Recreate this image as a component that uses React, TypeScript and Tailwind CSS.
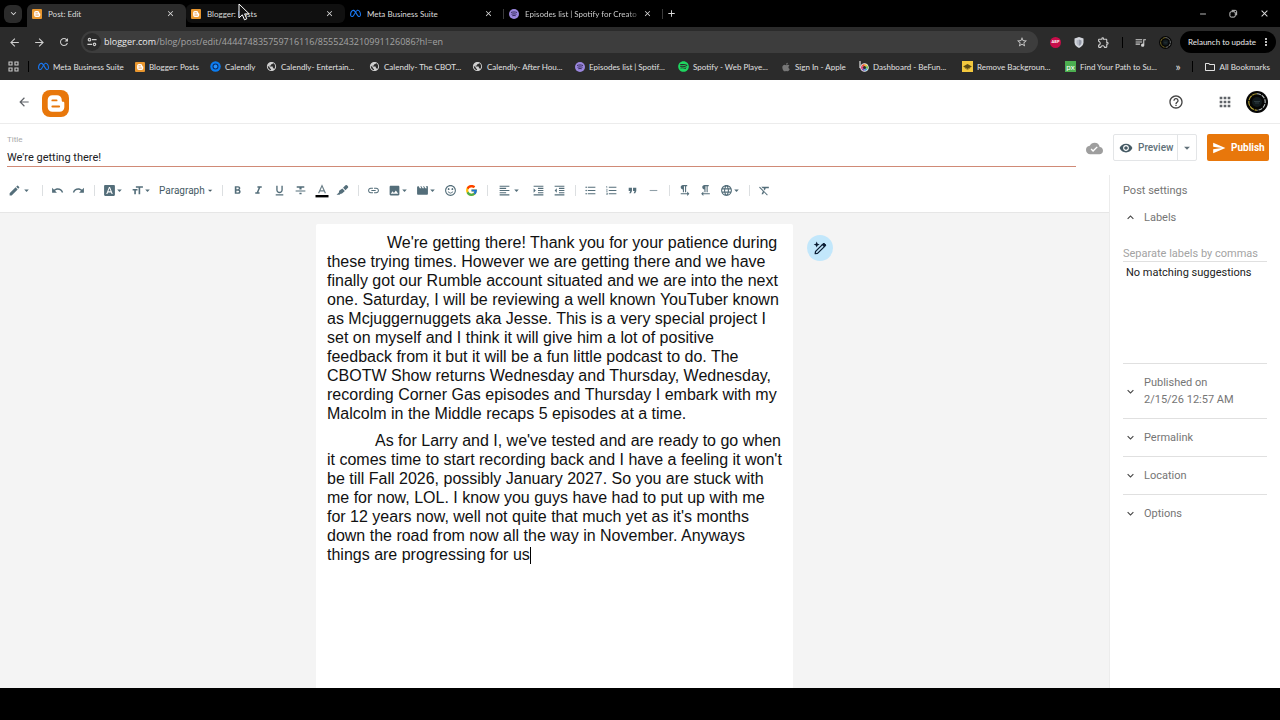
import type { ReactNode } from "react";
import clsx from "clsx";
import { FaApple, FaMeta, FaSpotify } from "react-icons/fa6";
import { FcGoogle } from "react-icons/fc";
import {
    MdAdd,
    MdApps,
    MdArrowBack,
    MdArrowDropDown,
    MdArrowForward,
    MdClose,
    MdCloudDone,
    MdEdit,
    MdExpandLess,
    MdExpandMore,
    MdFontDownload,
    MdFormatAlignLeft,
    MdFormatBold,
    MdFormatClear,
    MdFormatIndentDecrease,
    MdFormatIndentIncrease,
    MdFormatItalic,
    MdFormatListBulleted,
    MdFormatListNumbered,
    MdFormatQuote,
    MdFormatSize,
    MdFormatStrikethrough,
    MdFormatTextdirectionLToR,
    MdFormatTextdirectionRToL,
    MdFormatUnderlined,
    MdHelpOutline,
    MdImage,
    MdLanguage,
    MdLink,
    MdMoreVert,
    MdMovie,
    MdOutlineExtension,
    MdOutlineFolder,
    MdPublic,
    MdQueueMusic,
    MdRedo,
    MdRefresh,
    MdRemove,
    MdSend,
    MdSentimentSatisfiedAlt,
    MdStarBorder,
    MdUndo,
    MdVisibility,
} from "react-icons/md";

/* ---------- small drawings ---------- */

function BloggerMark({ className }: { className: string }) {
    return (
        <svg viewBox="0 0 26 26" className={className} aria-hidden="true">
            <path
                fill="#fff"
                d="M5.500 9.500a4.500 4.500 0 0 1 4.500-4.500h4.500a4.500 4.500 0 0 1 4.500 4.500v.6c0 .8.5 1.200 1.200 1.200.8 0 1.300.5 1.300 1.300v3.900a4.500 4.500 0 0 1-4.500 4.500h-7a4.500 4.500 0 0 1-4.500-4.500z"
            />
            <path stroke="#e8770b" strokeWidth="1.900" strokeLinecap="round" d="M10 10h4M10 15.800h6.500" />
        </svg>
    );
}

function BloggerTile() {
    return (
        <span className="flex size-[10px] shrink-0 items-center justify-center rounded-[1px] bg-[#e8962e]">
            <BloggerMark className="size-[10px]" />
        </span>
    );
}

function PodcastIcon() {
    return (
        <svg viewBox="0 0 20 20" className="size-[10px] shrink-0" aria-hidden="true">
            <circle cx="10" cy="10" r="10" fill="#9a86dd" />
            <path d="M4 7c4-1.500 8-1.500 12 0M5 10.500c3.500-1 7-1 10 0M6.500 13.500c2.500-.7 4.500-.7 7 0" stroke="#2c2350" strokeWidth="1.800" fill="none" />
        </svg>
    );
}

function CalendlyIcon() {
    return (
        <svg viewBox="0 0 20 20" className="size-[11px] shrink-0" aria-hidden="true">
            <circle cx="10" cy="10" r="9.500" fill="#0b7cf0" />
            <circle cx="10" cy="10" r="4.500" fill="none" stroke="#0d2f66" strokeWidth="2" />
            <circle cx="10" cy="10" r="3" fill="#2a93fa" />
        </svg>
    );
}

function BeFunkyIcon() {
    return (
        <svg viewBox="0 0 20 22" className="h-[11px] w-[10px] shrink-0" aria-hidden="true">
            <path d="M2 0v14" stroke="#d8d8d8" strokeWidth="2.500" />
            <circle cx="11" cy="13" r="8.500" fill="#e9e9e9" />
            <path d="M11 13V6a7 7 0 0 1 6 3.500z" fill="#f2b632" />
            <path d="M11 13l6-3.500a7 7 0 0 1 0 7z" fill="#6abf4b" />
            <path d="M11 13l6 3.500a7 7 0 0 1-6 3.500z" fill="#36a3dc" />
            <path d="M11 13v7a7 7 0 0 1-6-3.500z" fill="#7e4bb0" />
            <path d="M11 13l-6 3.500a7 7 0 0 1 0-7z" fill="#d63a7a" />
            <path d="M11 13L5 9.500A7 7 0 0 1 11 6z" fill="#e8532f" />
            <circle cx="11" cy="13" r="3" fill="#2b2b2b" />
        </svg>
    );
}

function RemoveBgIcon() {
    return (
        <svg viewBox="0 0 20 20" className="size-[11px] shrink-0" aria-hidden="true">
            <rect width="20" height="20" fill="#f3c83e" />
            <path d="M2 10l8-4.500 8 4.500-8 4.500z" fill="#5b4a14" />
            <path d="M5 12.500l5 3 5-3" stroke="#8a7426" strokeWidth="1.500" fill="none" />
        </svg>
    );
}

function TuneIcon() {
    return (
        <svg viewBox="0 0 12 12" className="size-[10px]" fill="none" stroke="currentColor" strokeWidth="1.400" aria-hidden="true">
            <circle cx="3" cy="3.200" r="1.500" />
            <path d="M6 3.200h5.500M.5 8.800H6" />
            <circle cx="9" cy="8.800" r="1.500" />
        </svg>
    );
}

function AppsGridIcon() {
    return (
        <svg viewBox="0 0 12 12" className="size-[11px]" fill="none" stroke="#c9c9c9" strokeWidth="1.200" aria-hidden="true">
            <path d="M1.100 1.100h3.300v3.300H1.100zM7.600 1.100h3.300v3.300H7.600zM1.100 7.600h3.300v3.300H1.100zM7.600 7.600h3.300v3.300H7.600z" />
        </svg>
    );
}

function ShieldIcon() {
    return (
        <svg viewBox="0 0 20 22" className="h-[11px] w-[10px]" aria-hidden="true">
            <path d="M10 0l9 3v8c0 5-4 9-9 11-5-2-9-6-9-11V3z" fill="#d3d6dc" />
            <path d="M10 5l5 2v4c0 3-2 5.500-5 7z" fill="#9297a6" />
            <path d="M10 5L5 7v4c0 3 2 5.500 5 7z" fill="#b4b8c4" />
        </svg>
    );
}

function RingAvatar({ className }: { className: string }) {
    return (
        <svg viewBox="0 0 22 22" className={className} aria-hidden="true">
            <circle cx="11" cy="11" r="11" fill="#050505" />
            <path d="M11 2.800A8.200 8.200 0 0 0 11 19.200" fill="none" stroke="#b5a336" strokeWidth="1.100" strokeDasharray="5 .8" />
            <path d="M11 2.800A8.200 8.200 0 0 1 11 19.200" fill="none" stroke="#b9c0c0" strokeWidth="1.100" strokeDasharray="4 1" />
            <circle cx="11" cy="11" r="5" fill="#111a1d" />
            <path d="M8 10.500h6M9 12h4" stroke="#3a4a50" strokeWidth=".7" />
        </svg>
    );
}

function HighlighterIcon() {
    return (
        <svg viewBox="0 0 24 24" className="size-[13px]" fill="currentColor" aria-hidden="true">
            <path d="M13 7l4.500-4.500a2 2 0 0 1 2.800 0l1.700 1.700a2 2 0 0 1 0 2.800L17.500 11.500z" />
            <path d="M11.800 8.200l4.500 4.500-4.600 4.600c-1 1-2.300.9-3.100.5L6.500 20H1l4.800-4.800c-.6-1-.3-2.200.5-3z" />
        </svg>
    );
}

function TextColorIcon() {
    return (
        <svg viewBox="0 0 14 14" className="size-[14px]" aria-hidden="true">
            <path d="M3.600 9.200L7 1.600l3.400 7.600M4.800 6.800h4.400" fill="none" stroke="#6b7f88" strokeWidth="1.200" />
            <rect x=".5" y="11" width="13" height="2.400" fill="#000" />
        </svg>
    );
}

function MagicPenIcon() {
    return (
        <svg viewBox="0 0 14 14" className="size-[14px]" fill="none" stroke="#0b1d33" aria-hidden="true">
            <path d="M2.600 10.400L9.400 3.600a1.300 1.300 0 0 1 2 2L4.500 12.400l-2.300.3z" strokeWidth="1.300" strokeLinejoin="round" />
            <path d="M9.200 3.600l1.800-1.400 1.900 1.900-1.500 1.800z" fill="#0b1d33" />
            <path d="M3.700.6l.9 2.100 2.100.9-2.100.9-.9 2.100-.9-2.100L.7 3.600l2.100-.9z" fill="#0b1d33" stroke="none" />
        </svg>
    );
}

/* ---------- browser ---------- */

const tabs = [
    { title: "Post: Edit", icon: <BloggerTile />, state: "active" },
    { title: "Blogger: Posts", icon: <BloggerTile />, state: "hover" },
    { title: "Meta Business Suite", icon: <FaMeta className="size-[11px] shrink-0 text-[#1877f2]" />, state: "idle" },
    { title: "Episodes list | Spotify for Creato", icon: <PodcastIcon />, state: "idle" },
];

function TabStrip() {
    return (
        <div className="flex h-[27px] items-center bg-black pl-1 text-[#dcdcdc]">
            <button aria-label="Search tabs" className="flex size-[18px] items-center justify-center rounded-md bg-[#2b2b2b]">
                <MdExpandMore className="size-[11px]" />
            </button>
            <div className="flex self-stretch pt-1 pl-[5px]">
                {tabs.map((tab) => (
                    <div
                        key={tab.title}
                        className={clsx(
                            "flex w-[159px] items-center rounded-t-md pr-[11px] pb-1 pl-[5px]",
                            tab.state === "active" && "bg-[#2b2b2b]",
                            tab.state === "hover" && "mb-1 rounded-md bg-[#101010] pt-1",
                        )}
                    >
                        {tab.icon}
                        <span
                            className={clsx(
                                "ml-[6px] flex-1 text-[8px] whitespace-nowrap",
                                tab.title.length > 30 && "bg-linear-to-r from-[#dcdcdc] from-90% to-[#333] bg-clip-text text-transparent",
                            )}
                        >
                            {tab.title}
                        </span>
                        <button aria-label={"Close " + tab.title} className="ml-1">
                            <MdClose className="size-[9px]" />
                        </button>
                        {tab.state === "idle" && <span className="-mr-[11px] ml-[10px] h-[10px] w-px bg-[#3a3a3a]" />}
                    </div>
                ))}
            </div>
            <button aria-label="New tab" className="ml-[3px]">
                <MdAdd className="size-[11px]" />
            </button>
            <div className="mr-[10px] ml-auto flex items-center gap-[21px]">
                <button aria-label="Minimize"><MdRemove className="size-[10px]" /></button>
                <button aria-label="Restore">
                    <svg viewBox="0 0 10 10" className="size-[9px]" fill="none" stroke="currentColor">
                        <rect x="1" y="3" width="6" height="6" rx="1.500" />
                        <path d="M3 1.500h4A1.500 1.500 0 0 1 8.500 3v4" />
                    </svg>
                </button>
                <button aria-label="Close window"><MdClose className="size-[11px]" /></button>
            </div>
        </div>
    );
}

function AddressRow() {
    return (
        <div className="flex h-[30px] items-center bg-[#2b2b2b] pr-1 pl-2 text-[#d0d0d0]">
            <div className="flex w-[73px] items-center gap-3">
                <button aria-label="Back"><MdArrowBack className="size-[13px]" /></button>
                <button aria-label="Forward"><MdArrowForward className="size-[13px]" /></button>
                <button aria-label="Reload"><MdRefresh className="size-[12px]" /></button>
            </div>
            <div className="flex h-[22px] flex-1 items-center rounded-full bg-[#3d3d3d] pr-[10px] pl-[2px]">
                <button aria-label="Site information" className="flex size-[18px] items-center justify-center rounded-full bg-[#2b2b2b]">
                    <TuneIcon />
                </button>
                <div className="ml-[3px] flex-1 font-['Open_Sans','Noto_Sans',sans-serif] text-[9px] text-[#a3a3a3]">
                    <span className="text-[#ececec]">blogger.com</span>/blog/post/edit/444474835759716116/8555243210991126086?hl=en
                </div>
                <button aria-label="Bookmark this tab"><MdStarBorder className="size-[12px]" /></button>
            </div>
            <div className="ml-3 flex items-center">
                <span className="flex size-[11px] items-center justify-center rounded-full bg-[#c70d4a] text-[4px] font-bold text-white">ABP</span>
                <span className="ml-[13px]"><ShieldIcon /></span>
                <MdOutlineExtension className="ml-[13px] size-[13px]" />
                <span className="ml-3 h-[11px] w-px bg-black" />
                <MdQueueMusic className="ml-[11px] size-[13px]" />
                <RingAvatar className="ml-3 size-[13px]" />
            </div>
            <button className="ml-2 flex h-[22px] items-center gap-1 rounded-full bg-black pr-1 pl-2 text-[8px] whitespace-nowrap text-[#ececec]">
                Relaunch to update
                <MdMoreVert className="size-[12px]" />
            </button>
        </div>
    );
}

const globe = <MdPublic className="size-[11px] shrink-0 text-[#d0d0d0]" />;

const bookmarks: { label: string; icon: ReactNode; width: string }[] = [
    { label: "Meta Business Suite", icon: <FaMeta className="size-[11px] shrink-0 text-[#1877f2]" />, width: "w-[97px]" },
    { label: "Blogger: Posts", icon: <BloggerTile />, width: "w-[75px]" },
    { label: "Calendly", icon: <CalendlyIcon />, width: "w-[56px]" },
    { label: "Calendly- Entertain...", icon: globe, width: "w-[103px]" },
    { label: "Calendly- The CBOT...", icon: globe, width: "w-[103px]" },
    { label: "Calendly- After Hou...", icon: globe, width: "w-[103px]" },
    { label: "Episodes list | Spotif...", icon: <PodcastIcon />, width: "w-[103px]" },
    { label: "Spotify - Web Playe...", icon: <FaSpotify className="size-[11px] shrink-0 text-[#1ed760]" />, width: "w-[103px]" },
    { label: "Sign In - Apple", icon: <FaApple className="size-[10px] shrink-0 text-[#777]" />, width: "w-[78px]" },
    { label: "Dashboard - BeFun...", icon: <BeFunkyIcon />, width: "w-[103px]" },
    { label: "Remove Backgroun...", icon: <RemoveBgIcon />, width: "w-[103px]" },
    {
        label: "Find Your Path to Su...",
        icon: <span className="flex size-[11px] shrink-0 items-center justify-center bg-[#4caf50] text-[8px] leading-none text-white">px</span>,
        width: "w-[103px]",
    },
];

function BookmarksBar() {
    return (
        <nav className="flex h-[23px] items-center bg-[#2b2b2b] pr-[10px] pb-1 pl-2 text-[8px] text-[#e0e0e0]">
            <button aria-label="Apps"><AppsGridIcon /></button>
            <span className="mr-[9px] ml-[9px] h-[11px] w-px bg-black" />
            {bookmarks.map((b) => (
                <a key={b.label} href="#" className={clsx("flex items-center gap-[4px] whitespace-nowrap", b.width)}>
                    {b.icon}
                    {b.label}
                </a>
            ))}
            <button aria-label="More bookmarks" className="ml-auto text-[12px] leading-none">»</button>
            <span className="mx-[11px] h-[11px] w-px bg-black" />
            <a href="#" className="flex items-center gap-1 whitespace-nowrap">
                <MdOutlineFolder className="size-[12px]" />
                All Bookmarks
            </a>
        </nav>
    );
}

/* ---------- blogger ---------- */

function Tool({ label, children }: { label: string; children: ReactNode }) {
    return (
        <button aria-label={label} className="flex w-[21px] items-center justify-center">
            {children}
        </button>
    );
}

function MenuTool({ label, className = "w-[28px] pl-1", children }: { label: string; className?: string; children: ReactNode }) {
    return (
        <button aria-label={label} className={clsx("flex items-center", className)}>
            {children}
            <MdArrowDropDown className="-ml-[2px] size-[11px]" />
        </button>
    );
}

function Divider() {
    return (
        <div className="flex w-[10px] justify-center">
            <span className="h-[11px] w-px bg-[#dcdfe1]" />
        </div>
    );
}

function EditorToolbar() {
    return (
        <div className="flex h-[38px] items-center border-b border-[#e6e6e6] pb-[6px] pl-[5px] text-[#546e7a]">
            <MenuTool label="Compose view" className="w-[32px] gap-[2px] pl-[3px]"><MdEdit className="size-[13px]" /></MenuTool>
            <Divider />
            <Tool label="Undo"><MdUndo className="size-[13px]" /></Tool>
            <Tool label="Redo"><MdRedo className="size-[13px]" /></Tool>
            <Divider />
            <MenuTool label="Font"><MdFontDownload className="size-[13px]" /></MenuTool>
            <MenuTool label="Font size"><MdFormatSize className="size-[13px]" /></MenuTool>
            <button className="flex w-[62px] items-center justify-between pr-[2px] pl-1 text-[10px] text-[#455a64]">
                Paragraph
                <MdArrowDropDown className="size-[11px]" />
            </button>
            <Divider />
            <Tool label="Bold"><MdFormatBold className="size-[13px]" /></Tool>
            <Tool label="Italic"><MdFormatItalic className="size-[13px]" /></Tool>
            <Tool label="Underline"><MdFormatUnderlined className="size-[13px]" /></Tool>
            <Tool label="Strikethrough"><MdFormatStrikethrough className="size-[13px]" /></Tool>
            <Tool label="Text color"><TextColorIcon /></Tool>
            <Tool label="Highlight color"><HighlighterIcon /></Tool>
            <Divider />
            <Tool label="Insert link"><MdLink className="size-[13px]" /></Tool>
            <MenuTool label="Insert image"><MdImage className="size-[13px]" /></MenuTool>
            <MenuTool label="Insert video"><MdMovie className="size-[13px]" /></MenuTool>
            <Tool label="Insert emoji"><MdSentimentSatisfiedAlt className="size-[13px]" /></Tool>
            <Tool label="Search Google"><FcGoogle className="size-[13px]" /></Tool>
            <Divider />
            <MenuTool label="Alignment" className="w-[36px] gap-[2px] pl-[6px]"><MdFormatAlignLeft className="size-[13px]" /></MenuTool>
            <Tool label="Increase indent"><MdFormatIndentIncrease className="size-[13px]" /></Tool>
            <Tool label="Decrease indent"><MdFormatIndentDecrease className="size-[13px]" /></Tool>
            <Divider />
            <Tool label="Bulleted list"><MdFormatListBulleted className="size-[13px]" /></Tool>
            <Tool label="Numbered list"><MdFormatListNumbered className="size-[13px]" /></Tool>
            <Tool label="Quote"><MdFormatQuote className="size-[13px]" /></Tool>
            <Tool label="Jump break"><MdRemove className="size-[13px] text-[#90a0a8]" /></Tool>
            <Divider />
            <Tool label="Left to right"><MdFormatTextdirectionLToR className="size-[13px]" /></Tool>
            <Tool label="Right to left"><MdFormatTextdirectionRToL className="size-[13px]" /></Tool>
            <MenuTool label="Input tools"><MdLanguage className="size-[13px]" /></MenuTool>
            <Divider />
            <Tool label="Clear formatting"><MdFormatClear className="size-[13px]" /></Tool>
        </div>
    );
}

function AppHeader() {
    return (
        <header className="flex h-[44px] items-center border-b border-[#ececec] pr-3 pl-[17px]">
            <button aria-label="Back to posts" className="text-[#5f6368]"><MdArrowBack className="size-[14px]" /></button>
            <a href="#" aria-label="Blogger" className="mt-[3px] ml-[11px] rounded-lg bg-[#e8770b]">
                <BloggerMark className="size-[27px]" />
            </a>
            <div className="ml-auto flex items-center">
                <button aria-label="Help" className="text-[#444]"><MdHelpOutline className="size-[16px]" /></button>
                <button aria-label="Google apps" className="ml-[33px] text-[#5f6368]"><MdApps className="size-[16px]" /></button>
                <button aria-label="Account" className="ml-[13px]"><RingAvatar className="size-[22px]" /></button>
            </div>
        </header>
    );
}

function TitleRow() {
    return (
        <div className="flex h-[51px] items-start pr-[11px] pl-[7px]">
            <div className="flex-1 border-b border-[#d08a76] pt-[9px]">
                <label htmlFor="post-title" className="block text-[8px] leading-[13px] text-[#a8a8a8]">Title</label>
                <input
                    id="post-title"
                    defaultValue="We're getting there!"
                    className="block h-[20px] w-full pt-[2px] text-[11px] text-[#202124] outline-none"
                />
            </div>
            <MdCloudDone className="mt-4 ml-[10px] size-[17px] text-[#9e9e9e]" />
            <div className="mt-[10px] ml-[10px] flex h-[27px] rounded-xs border border-[#e3e5e7] text-[#607079]">
                <button className="flex w-[63px] items-center gap-[5px] pl-[5px] text-[10px] font-medium">
                    <MdVisibility className="size-[14px] text-[#455a64]" />
                    Preview
                </button>
                <button aria-label="Preview options" className="flex w-[19px] items-center justify-center border-l border-[#e3e5e7]">
                    <MdArrowDropDown className="size-[14px]" />
                </button>
            </div>
            <button className="mt-[10px] ml-[10px] flex h-[27px] w-[62px] items-center gap-[5px] rounded-xs bg-[#e8770b] pl-[5px] text-[10px] font-bold text-white">
                <MdSend className="size-[14px]" />
                Publish
            </button>
        </div>
    );
}

function PostEditor() {
    return (
        <div className="flex flex-1 justify-center bg-[#f4f4f4] pt-[11px]">
            <div className="relative w-[477px] rounded-t-xs bg-white px-[11px] pt-[9px]">
                <div
                    role="textbox"
                    aria-label="Post body"
                    contentEditable
                    suppressContentEditableWarning
                    spellCheck={false}
                    className="font-['Liberation_Sans',Arial,sans-serif] text-[16px] leading-[19px] text-[#111] outline-none"
                >
                    <p className="indent-[60px]">
                        We're getting there! Thank you for your patience during these trying times. However we are getting
                        there and we have finally got our Rumble account situated and we are into the next one. Saturday, I
                        will be reviewing a well known YouTuber known as Mcjuggernuggets aka Jesse. This is a very special
                        project I set on myself and I think it will give him a lot of positive feedback from it but it will
                        be a fun little podcast to do. The CBOTW Show returns Wednesday and Thursday, Wednesday, recording
                        Corner Gas episodes and Thursday I embark with my Malcolm in the Middle recaps 5 episodes at a time.
                    </p>
                    <p className="mt-2 indent-[48px]">
                        As for Larry and I, we've tested and are ready to go when it comes time to start recording back and
                        I have a feeling it won't be till Fall 2026, possibly January 2027. So you are stuck with me for
                        now, LOL. I know you guys have had to put up with me for 12 years now, well not quite that much yet
                        as it's months down the road from now all the way in November. Anyways things are progressing for us
                        <span className="inline-block h-[17px] w-px bg-black align-[-4px]" />
                    </p>
                </div>
                <button
                    aria-label="Help me write"
                    className="absolute top-[11px] left-full ml-[14px] flex size-[26px] items-center justify-center rounded-full bg-[#c2e7fb]"
                >
                    <MagicPenIcon />
                </button>
            </div>
        </div>
    );
}

function SettingsRow({ children }: { children: ReactNode }) {
    return (
        <button className="flex w-full items-center gap-[7px] py-[10px] pl-px text-left leading-[17px]">
            <MdExpandMore className="size-[13px] text-[#444]" />
            <span>{children}</span>
        </button>
    );
}

function PostSettings() {
    return (
        <aside className="w-[171px] shrink-0 border-l border-[#ececec] px-[13px] text-[11px] text-[#757575]">
            <h2 className="pt-[7px] leading-[17px]">Post settings</h2>
            <button className="mt-[10px] flex items-center gap-[7px] pl-px leading-[17px]">
                <MdExpandLess className="size-[13px] text-[#444]" />
                Labels
            </button>
            <input
                aria-label="Separate labels by commas"
                placeholder="Separate labels by commas"
                className="mt-[19px] block h-[17px] w-full border-b border-[#e0e0e0] outline-none placeholder:text-[#a3a3a3]"
            />
            <p className="h-[101px] pt-[2px] pl-[3px] leading-[17px] text-[#212121]">No matching suggestions</p>
            <div className="divide-y divide-[#e0e0e0] border-t border-[#e0e0e0]">
                <SettingsRow>
                    Published on
                    <br />
                    2/15/26 12:57 AM
                </SettingsRow>
                <SettingsRow>Permalink</SettingsRow>
                <SettingsRow>Location</SettingsRow>
                <SettingsRow>Options</SettingsRow>
            </div>
        </aside>
    );
}

export default function App() {
    return (
        <div className="relative flex min-h-screen flex-col bg-black pb-8">
            <div className="font-[Lato,'Open_Sans',sans-serif]">
                <TabStrip />
                <AddressRow />
                <BookmarksBar />
            </div>
            <div className="flex flex-1 flex-col bg-white font-[Roboto,sans-serif]">
                <AppHeader />
                <TitleRow />
                <div className="flex flex-1">
                    <main className="flex min-w-0 flex-1 flex-col">
                        <EditorToolbar />
                        <PostEditor />
                    </main>
                    <PostSettings />
                </div>
            </div>

            {/* Mouse pointer */}
            <svg viewBox="0 0 12 18" className="pointer-events-none absolute top-[3px] left-[238px] h-[18px] w-[12px]" aria-hidden="true">
                <path d="M1 1v14l3.300-3.200 2.200 5 2.300-1-2.200-4.900h4.600z" fill="#111" stroke="#fff" />
            </svg>
        </div>
    );
}
